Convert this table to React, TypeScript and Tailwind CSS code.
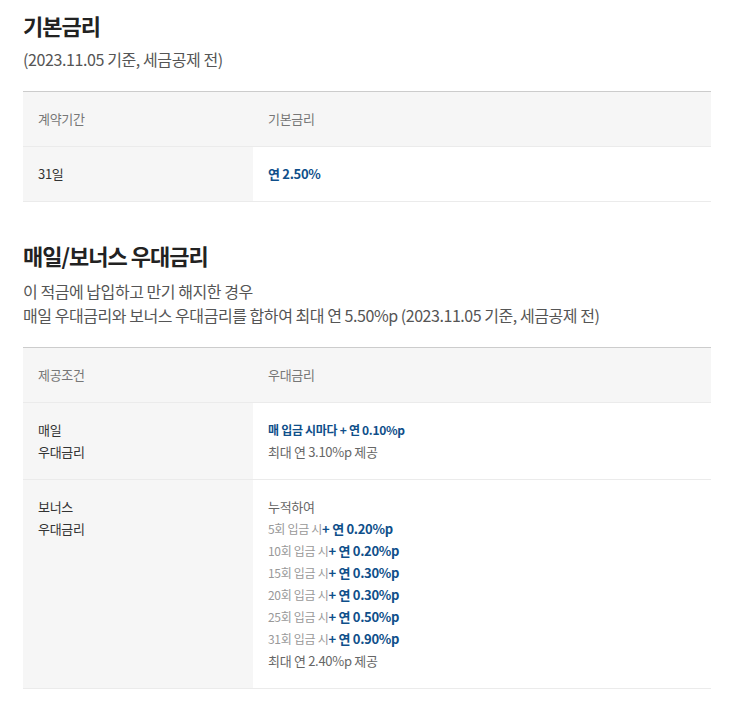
const font = { fontFamily: '"Noto Sans CJK KR", "Noto Sans", sans-serif' };

const bonus = [
  { n: '5회', rate: '0.20%p' },
  { n: '10회', rate: '0.20%p' },
  { n: '15회', rate: '0.30%p' },
  { n: '20회', rate: '0.30%p' },
  { n: '25회', rate: '0.50%p' },
  { n: '31회', rate: '0.90%p' },
];

function HeadRow({ left, right }: { left: string; right: string }) {
  return (
    <div className="grid grid-cols-[230px_1fr] border-b border-[#ebebeb] bg-[#f6f6f6] text-[13px] leading-[22px] text-[#777]">
      <div className="px-[15px] py-4">{left}</div>
      <div className="px-[15px] py-4">{right}</div>
    </div>
  );
}

export default function App() {
  return (
    <div className="min-h-screen bg-white px-[23px] pb-6 pt-[9px] tracking-[-0.3px] text-[#333]" style={font}>
      <h2 className="text-[22px] font-bold leading-[32px] tracking-[-1px] text-[#222]">기본금리</h2>
      <p className="mt-[6px] text-[16px] leading-[24px] tracking-[-0.4px] text-[#555]">(2023.11.05 기준, 세금공제 전)</p>

      <div className="mt-[20px] w-[688px] border-t border-[#cccccc]">
        <HeadRow left="계약기간" right="기본금리" />
        <div className="grid grid-cols-[230px_1fr] border-b border-[#ebebeb] text-[13px] leading-[22px]">
          <div className="bg-[#f6f6f6] px-[15px] py-4 text-[#333]">31일</div>
          <div className="px-[15px] py-4 font-bold text-[#0f4f8a]">연 2.50%</div>
        </div>
      </div>

      <h2 className="mt-[37px] text-[22px] font-bold leading-[32px] tracking-[-1px] text-[#222]">매일/보너스 우대금리</h2>
      <p className="mt-[8px] text-[16px] leading-[24px] tracking-[-0.45px] text-[#555]">
        이 적금에 납입하고 만기 해지한 경우
        <br />
        매일 우대금리와 보너스 우대금리를 합하여 최대 연 5.50%p (2023.11.05 기준, 세금공제 전)
      </p>

      <div className="mt-[20px] w-[688px] border-t border-[#cccccc]">
        <HeadRow left="제공조건" right="우대금리" />
        <div className="grid grid-cols-[230px_1fr] border-b border-[#ebebeb] text-[13px] leading-[22px]">
          <div className="bg-[#f6f6f6] px-[15px] py-4 text-[#333]">
            매일
            <br />
            우대금리
          </div>
          <div className="px-[15px] py-4 text-[#666]">
            <div className="flex h-[22px] items-center text-[12px] font-bold text-[#0f4f8a]">매 입금 시마다 + 연 0.10%p</div>
            <div>최대 연 3.10%p 제공</div>
          </div>
        </div>
        <div className="grid grid-cols-[230px_1fr] border-b border-[#ebebeb] text-[13px] leading-[22px]">
          <div className="bg-[#f6f6f6] px-[15px] py-4 text-[#333]">
            보너스
            <br />
            우대금리
          </div>
          <div className="px-[15px] py-4 text-[#666]">
            <div>누적하여</div>
            {bonus.map((b) => (
              <div key={b.n} className="flex h-[22px] items-baseline">
                <span className="text-[12px] text-[#999]">{b.n} 입금 시</span>
                <span className="text-[13px] font-bold text-[#0f4f8a]">+ 연 {b.rate}</span>
              </div>
            ))}
            <div>최대 연 2.40%p 제공</div>
          </div>
        </div>
      </div>
    </div>
  );
}
